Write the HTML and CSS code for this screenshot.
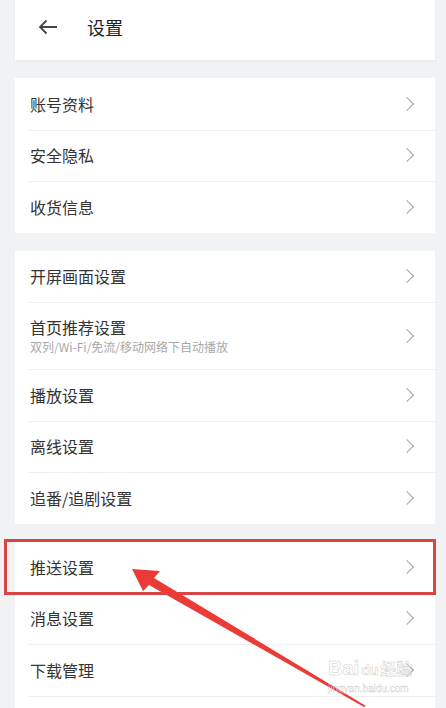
FILE: index.html
```html
<!DOCTYPE html>
<html lang="zh-CN">
<head>
<meta charset="utf-8">
<title>设置</title>
<link rel="stylesheet" href="styles.css">
</head>
<body>
<div class="page">
  <header class="topbar">
    <svg class="back" width="20" height="16" viewBox="0 0 20 16"><path d="M19 8H2M8.5 1.5L2 8l6.5 6.5" fill="none" stroke="#444" stroke-width="1.8"/></svg>
    <span class="title">设置</span>
  </header>

  <section class="group">
    <div class="row"><span class="label">账号资料</span><span class="chev"></span></div>
    <div class="row"><span class="label">安全隐私</span><span class="chev"></span></div>
    <div class="row"><span class="label">收货信息</span><span class="chev"></span></div>
  </section>

  <section class="group">
    <div class="row"><span class="label">开屏画面设置</span><span class="chev"></span></div>
    <div class="row tall"><div class="texts"><span class="label">首页推荐设置</span><span class="sub">双列/Wi-Fi/免流/移动网络下自动播放</span></div><span class="chev"></span></div>
    <div class="row"><span class="label">播放设置</span><span class="chev"></span></div>
    <div class="row"><span class="label">离线设置</span><span class="chev"></span></div>
    <div class="row"><span class="label">追番/追剧设置</span><span class="chev"></span></div>
  </section>

  <section class="group last">
    <div class="row highlight"><span class="label">推送设置</span><span class="chev"></span></div>
    <div class="row"><span class="label">消息设置</span><span class="chev"></span></div>
    <div class="row"><span class="label">下载管理</span><span class="chev"></span></div>
    <div class="row"></div>
  </section>
</div>

<svg class="pointer" width="446" height="708" viewBox="0 0 446 708">
  <path d="M132 569 L160 571 L154 578 L366 706 L364 707 L149 585 L143 591 Z" fill="#ea3b36"/>
</svg>

<div class="watermark">
  <div class="wm-logo">Bai<span class="wm-du">du</span><span class="wm-cn">经验</span></div>
  <div class="wm-url">jingyan.baidu.com</div>
</div>
</body>
</html>
```

FILE: styles.css
```css
* { box-sizing: border-box; }
html, body { margin: 0; padding: 0; }
body {
  background: #f1f2f4;
  font-family: "Noto Sans CJK SC", "Noto Sans", sans-serif;
  color: #333;
  width: 446px;
  height: 708px;
  overflow: hidden;
  position: relative;
}
.page {
  margin: 0 11px 0 15px;
}
.topbar {
  background: #fff;
  height: 60px;
  display: flex;
  align-items: center;
  padding-left: 23px;
  box-shadow: 0 1px 2px rgba(0,0,0,0.05);
}
.back { margin-right: 29px; margin-top: -6px; }
.title {
  font-size: 18px;
  color: #222;
  margin-top: -6px;
}
.group {
  background: #fff;
  margin-top: 18px;
}
.group.last { margin-top: 17px; }
.row {
  height: 51.5px;
  display: flex;
  align-items: center;
  justify-content: space-between;
  padding: 0 21px 0 15px;
  position: relative;
}
.row + .row::before {
  content: "";
  position: absolute;
  left: 13px;
  right: 0;
  top: 0;
  border-top: 1px solid #eeeff1;
}
.highlight + .row::before { display: none; }
.row.tall { height: 67px; }
.label {
  font-size: 16px;
  color: #333;
}
.texts {
  display: flex;
  flex-direction: column;
  margin-top: -2px;
}
.sub {
  font-size: 12px;
  color: #a8a8a8;
  line-height: 16px;
}
.chev {
  width: 10px;
  height: 10px;
  border-top: 1.2px solid #a3a3a3;
  border-right: 1.2px solid #a3a3a3;
  transform: rotate(45deg);
  margin-right: 2px;
}
.highlight {
  outline: 3px solid #d94444;
  outline-offset: -1px;
  margin-left: -9px;
  margin-right: 1px;
  padding-left: 24px;
  padding-right: 20px;
  height: 52px;
}
.pointer {
  position: absolute;
  left: 0;
  top: 0;
  pointer-events: none;
}
.watermark {
  position: absolute;
  left: 328px;
  top: 657px;
  color: rgba(255,255,255,0.6);
  -webkit-text-stroke: 0.6px rgba(150,150,150,0.45);
  pointer-events: none;
  font-family: "Liberation Sans", sans-serif;
}
.wm-logo { font-size: 20px; font-weight: bold; line-height: 22px; }
.wm-du { font-size: 14px; margin: 0 2px; }
.wm-cn { font-family: "Noto Sans CJK SC", sans-serif; font-size: 16px; }
.wm-url { font-size: 10px; -webkit-text-stroke: 0.4px rgba(150,150,150,0.5); margin-top: 2px; }
```
